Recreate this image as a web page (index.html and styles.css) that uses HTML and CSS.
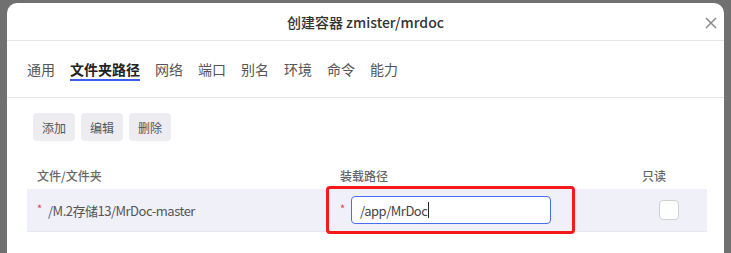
FILE: index.html
```html
<!DOCTYPE html>
<html lang="zh-CN">
<head>
  <meta charset="UTF-8">
  <title>创建容器 zmister/mrdoc</title>
  <link rel="stylesheet" href="styles.css">
</head>
<body>
  <div class="dialog">
    <!-- 标题栏 -->
    <div class="dialog-head">
      <span class="dialog-title">创建容器 zmister/mrdoc</span>
      <span class="close">
        <svg width="12" height="12" viewBox="0 0 12 12"><path d="M1 1L11 11M11 1L1 11" stroke="#8a8a8a" stroke-width="1.5" fill="none"/></svg>
      </span>
    </div>

    <!-- 选项卡 -->
    <div class="tabs">
      <span class="tab">通用</span>
      <span class="tab active">文件夹路径</span>
      <span class="tab">网络</span>
      <span class="tab">端口</span>
      <span class="tab">别名</span>
      <span class="tab">环境</span>
      <span class="tab">命令</span>
      <span class="tab">能力</span>
    </div>

    <div class="dialog-body">
      <div class="toolbar">
        <button class="btn">添加</button>
        <button class="btn">编辑</button>
        <button class="btn">删除</button>
      </div>

      <div class="grid">
        <div class="grid-head">
          <div class="cell">文件/文件夹</div>
          <div class="cell">装载路径</div>
          <div class="cell ro-head">只读</div>
        </div>
        <div class="grid-row">
          <div class="cell"><span class="req">*</span>/M.2存储13/MrDoc-master</div>
          <div class="cell mount">
            <span class="req">*</span>
            <div class="input">/app/MrDoc<span class="caret"></span></div>
            <!-- 红色标注框 -->
            <div class="mark"></div>
          </div>
          <div class="cell"><span class="check"></span></div>
        </div>
      </div>
    </div>
  </div>
</body>
</html>
```

FILE: styles.css
```css
body {
  margin: 0;
  background: #707070;
  font-family: "Noto Sans CJK SC", "Noto Sans", sans-serif;
  color: #333;
  overflow: hidden;
}

.dialog {
  margin: 3px 0 0 7px;
  width: 717px;
  height: 260px;
  background: #fff;
  border-radius: 10px 10px 0 0;
}

.dialog-head {
  position: relative;
  height: 37px;
  border-bottom: 1px solid #e6e6e6;
  display: flex;
  align-items: center;
  justify-content: center;
}
.dialog-title {
  font-size: 14px;
  font-weight: 500;
  color: #333;
}
.close {
  position: absolute;
  right: 7px;
  top: 14px;
  width: 12px;
  height: 12px;
  display: flex;
}

.tabs {
  height: 57px;
  box-sizing: border-box;
  padding: 18px 0 0 20px;
  border-bottom: 1px solid #e6e6e6;
  display: flex;
  gap: 15px;
}
.tab {
  font-size: 14px;
  line-height: 20px;
  color: #555;
  padding-bottom: 0;
  border-bottom: 2px solid transparent;
  height: 20px;
}
.tab.active {
  font-weight: 700;
  color: #222;
  border-bottom-color: #3d5af1;
}

.dialog-body {
  padding: 15px 17px 0 20px;
}

.toolbar {
  display: flex;
  gap: 6px;
  padding-left: 6px;
}
.btn {
  font-family: inherit;
  font-size: 12px;
  color: #555;
  background: #ececf1;
  border: none;
  border-radius: 4px;
  width: 42px;
  height: 28px;
  padding: 0;
}

.grid {
  margin-top: 20px;
  width: 680px;
}
.grid-head,
.grid-row {
  display: grid;
  grid-template-columns: 303px 310px 67px;
}
.grid-head {
  height: 28px;
  align-items: center;
  font-size: 12px;
  font-weight: 500;
  color: #666;
}
.grid-row {
  height: 42px;
  align-items: center;
  background: #f0f0f9;
  border-bottom: 1px solid #e6e6ee;
  font-size: 13px;
  letter-spacing: -0.5px;
  color: #555;
}
.cell {
  padding-left: 10px;
  display: flex;
  align-items: center;
}
.ro-head {
  padding-left: 2px;
}

.req {
  color: #e8383d;
  font-size: 11px;
  width: 11px;
  margin-top: -4px;
}

.mount {
  position: relative;
  height: 42px;
}
.input {
  width: 200px;
  height: 28px;
  box-sizing: border-box;
  border: 1px solid #4b6cf5;
  border-radius: 4px;
  background: #fff;
  padding-left: 8px;
  display: flex;
  align-items: center;
  color: #444;
}
.caret {
  display: inline-block;
  width: 1px;
  height: 16px;
  margin-left: 1px;
  background: #222;
}
.mark {
  position: absolute;
  left: -4px;
  top: -3px;
  width: 249px;
  height: 48px;
  box-sizing: border-box;
  border: 3px solid #f5191c;
  border-radius: 4px;
}

.check {
  margin-left: 9px;
  width: 20px;
  height: 20px;
  box-sizing: border-box;
  background: #fff;
  border: 1px solid #cfcfd6;
  border-radius: 4px;
}
```
